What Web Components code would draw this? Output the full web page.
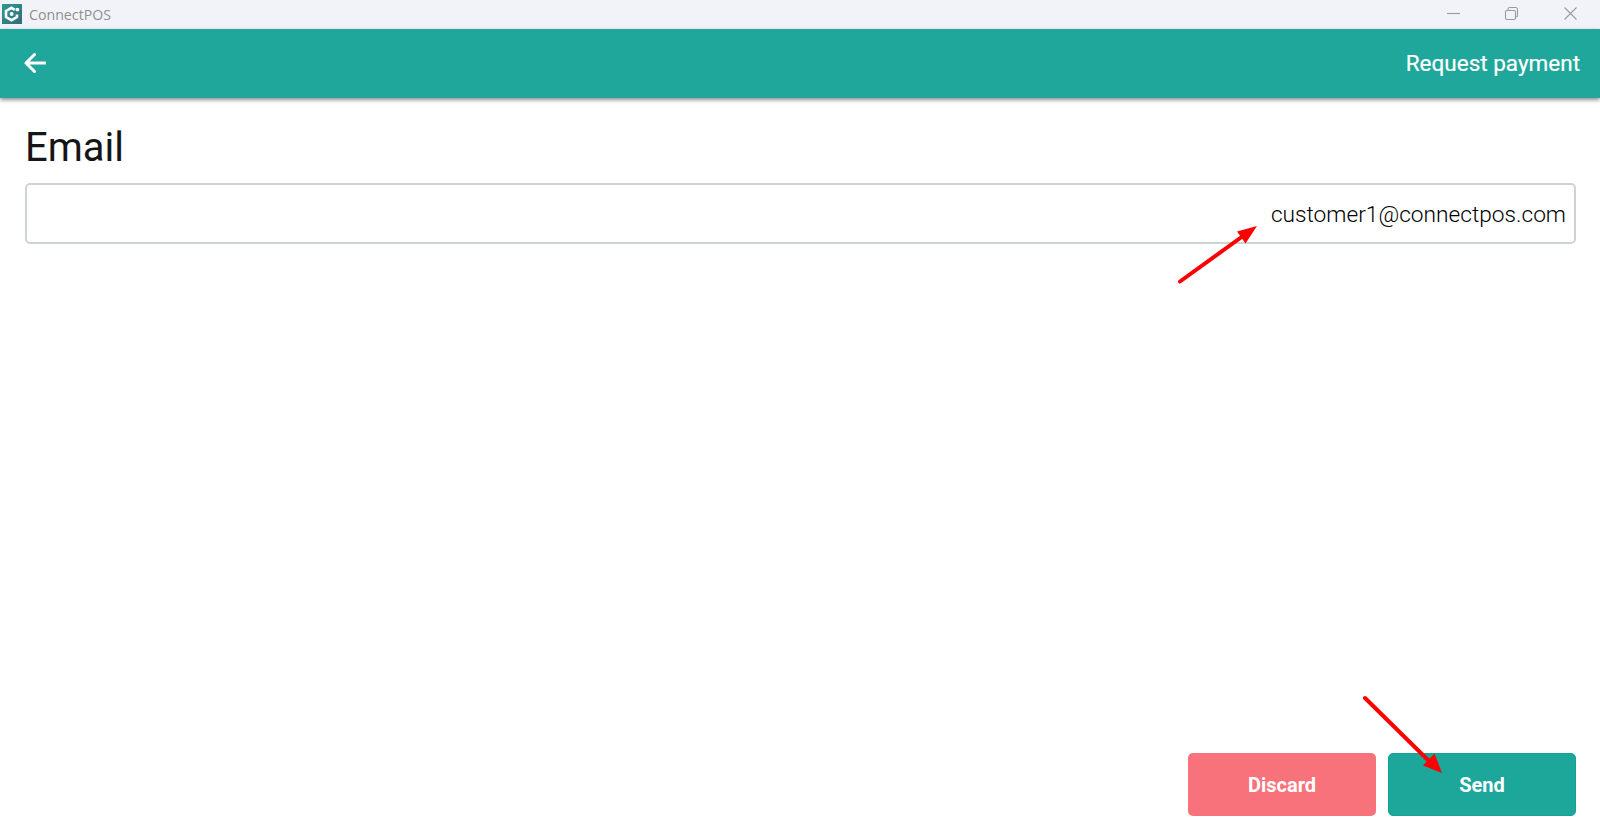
<!DOCTYPE html>
<html lang="en">
<head>
<meta charset="UTF-8">
<title>ConnectPOS</title>
<style>
  html, body { margin: 0; height: 100%; }
  body { font-family: Roboto, sans-serif; background: #fff; overflow: hidden; }
</style>
</head>
<body>
<pos-app>
  <title-bar slot="top" label="ConnectPOS"></title-bar>
  <app-header slot="top" label="Request payment"></app-header>
  <email-field label="Email" value="customer1@connectpos.com"></email-field>
  <pos-button slot="actions" kind="discard">Discard</pos-button>
  <pos-button slot="actions" kind="send">Send</pos-button>
</pos-app>

<script>
  class PosApp extends HTMLElement {
    constructor() {
      super();
      this.attachShadow({ mode: 'open' }).innerHTML = `
        <style>
          :host { display: flex; flex-direction: column; height: 840px; width: 1600px; position: relative; }
          main { flex: 1; padding: 0 24px 0 25px; }
          footer { display: flex; justify-content: flex-end; gap: 12px; padding: 0 24px 24px 0; }
          svg.notes { position: absolute; left: 0; top: 0; pointer-events: none; }
        </style>
        <slot name="top"></slot>
        <main><slot></slot></main>
        <footer><slot name="actions"></slot></footer>
        <svg class="notes" width="1600" height="840" viewBox="0 0 1600 840">
          <g stroke="#fe0000" stroke-width="4" stroke-linecap="round" fill="#fe0000">
            <line x1="1180" y1="281.5" x2="1243" y2="236"/>
            <line x1="1365" y1="698" x2="1430" y2="762"/>
          </g>
          <polygon points="1257,226 1245.5,243.5 1237,231.5" fill="#fe0000"/>
          <polygon points="1442,773 1423,765.5 1434.5,753.5" fill="#fe0000"/>
        </svg>`;
    }
  }

  class TitleBar extends HTMLElement {
    constructor() {
      super();
      this.attachShadow({ mode: 'open' }).innerHTML = `
        <style>
          :host { display: flex; align-items: center; height: 29px; background: #f2f3f8; color: #8e8f91; }
          .logo { width: 20px; height: 20px; margin: -1px 0 0 2px; }
          .name { margin: -1px 0 0 7px; font: 14.2px "Open Sans", sans-serif; }
          .ctrls { margin: -1px 0 0 auto; display: flex; }
          .ctrls svg { display: block; }
        </style>
        <svg class="logo" viewBox="0 0 20 20">
          <defs><linearGradient id="g" x1="0" y1="0" x2="1" y2="1">
            <stop offset="0" stop-color="#2a9c92"/><stop offset="1" stop-color="#35697c"/>
          </linearGradient></defs>
          <rect width="20" height="20" fill="url(#g)"/>
          <path d="M12.8 5.8 L9.5 3.8 L4 7 V13 L9.5 16.2 L15 13 V10.5" fill="none" stroke="#fff" stroke-width="2.6"/>
          <circle cx="9.6" cy="10" r="2" fill="#fff"/>
          <circle cx="15.4" cy="5.6" r="1.9" fill="#fff"/>
        </svg>
        <span class="name"></span>
        <div class="ctrls">
          <svg width="200" height="28" viewBox="0 0 200 28" fill="none" stroke="#9a9b9e" stroke-width="1.1">
            <line x1="47" y1="13.5" x2="60" y2="13.5"/>
            <rect x="105.5" y="10.5" width="10" height="9" rx="1.5"/>
            <path d="M108 10 V9 Q108 7.5 110 7.5 H115.5 Q117.5 7.5 117.5 9.5 V15 Q117.5 17 116 17"/>
            <path d="M164.5 7.5 L176.5 19.5 M176.5 7.5 L164.5 19.5"/>
          </svg>
        </div>`;
      this.shadowRoot.querySelector('.name').textContent = this.getAttribute('label');
    }
  }

  class AppHeader extends HTMLElement {
    constructor() {
      super();
      this.attachShadow({ mode: 'open' }).innerHTML = `
        <style>
          :host {
            display: flex; align-items: center; justify-content: space-between;
            height: 69px; padding: 0 20px 2px 24px; box-sizing: border-box;
            background: #1fa79b; color: #fff; box-shadow: 0 2px 4px rgba(0,0,0,.45);
            position: relative;
          }
          svg { display: block; }
          span { font: 400 22.5px Roboto, sans-serif; -webkit-text-stroke: .2px #fff; }
        </style>
        <svg width="22" height="22" viewBox="0 0 22 22" fill="none" stroke="#fff" stroke-width="3" stroke-linecap="round" stroke-linejoin="round">
          <path d="M21 11 H2 M10.5 2.5 L2 11 L10.5 19.5"/>
        </svg>
        <span></span>`;
      this.shadowRoot.querySelector('span').textContent = this.getAttribute('label');
    }
  }

  class EmailField extends HTMLElement {
    constructor() {
      super();
      this.attachShadow({ mode: 'open' }).innerHTML = `
        <style>
          :host { display: block; }
          label { display: block; font: 400 40px/47px Roboto, sans-serif; color: #151515; margin-top: 26px; }
          .box {
            margin-top: 12px; height: 61px; box-sizing: border-box;
            border: 2px solid #d0d3d4; border-radius: 5px;
            display: flex; align-items: center; justify-content: flex-end;
            padding: 2px 8px 0 0; font: 300 22.7px Roboto, sans-serif; color: #000;
          }
        </style>
        <label></label>
        <div class="box"></div>`;
      this.shadowRoot.querySelector('label').textContent = this.getAttribute('label');
      this.shadowRoot.querySelector('.box').textContent = this.getAttribute('value');
    }
  }

  class PosButton extends HTMLElement {
    constructor() {
      super();
      this.attachShadow({ mode: 'open' }).innerHTML = `
        <style>
          :host {
            display: flex; align-items: center; justify-content: center;
            width: 188px; height: 63px; box-sizing: border-box; border-radius: 5px;
            font: 700 20px Roboto, sans-serif; color: #fff;
          }
          :host([kind="discard"]) { background: #f7727a; }
          :host([kind="send"]) { background: #1da69a; border: 1px solid #0fa597; }
        </style>
        <slot></slot>`;
    }
  }

  customElements.define('pos-app', PosApp);
  customElements.define('title-bar', TitleBar);
  customElements.define('app-header', AppHeader);
  customElements.define('email-field', EmailField);
  customElements.define('pos-button', PosButton);
</script>
</body>
</html>
